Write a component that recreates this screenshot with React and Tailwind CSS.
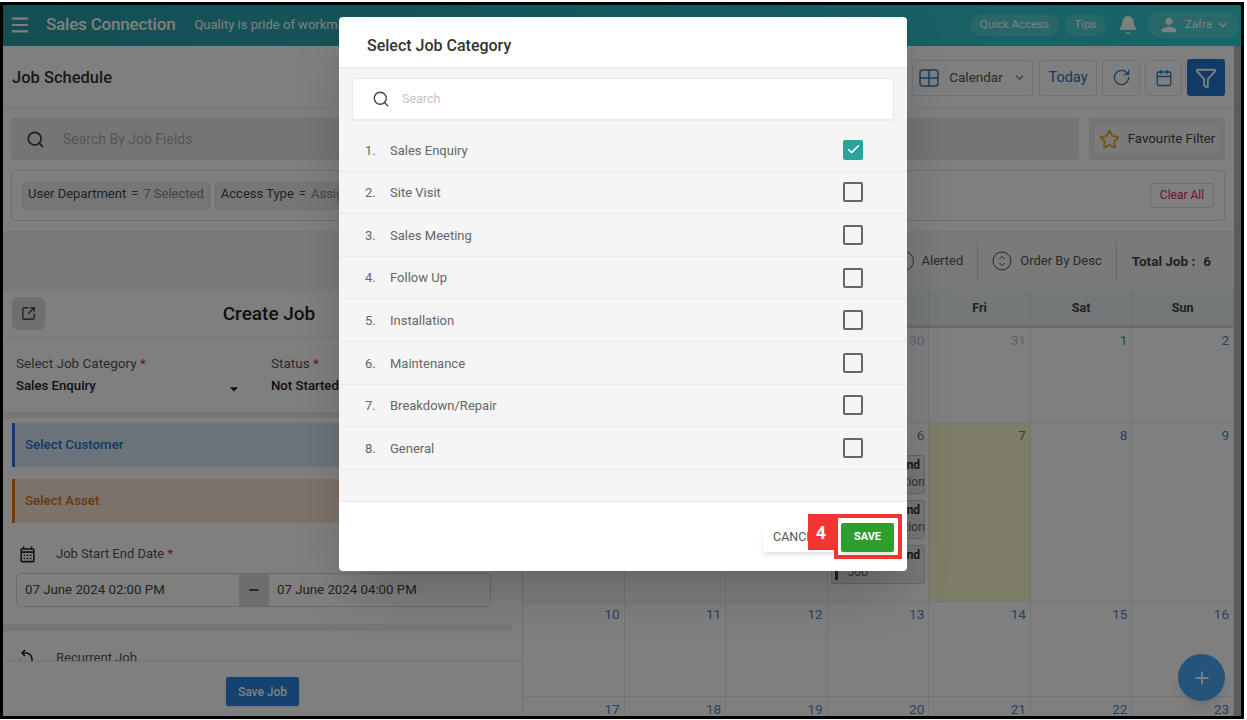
import React from "react";
import { Menu, Search, Bell, ChevronDown, RotateCw, Calendar, Funnel, Star, SquareArrowOutUpRight, Plus, Check, Minus } from "lucide-react";
import { MdPerson, MdArrowDropDown, MdOutlineCalendarMonth } from "react-icons/md";

const categories = ["Sales Enquiry", "Site Visit", "Sales Meeting", "Follow Up", "Installation", "Maintenance", "Breakdown/Repair", "General"];
const weekDays = ["Mon", "Tue", "Wed", "Thu", "Fri", "Sat", "Sun"];
const weeks = [
  [27, 28, 29, 30, 31, 1, 2],
  [3, 4, 5, 6, 7, 8, 9],
  [10, 11, 12, 13, 14, 15, 16],
  [17, 18, 19, 20, 21, 22, 23],
];

function ToolButton({ children, className }) {
  return (
    <div className={"h-9 flex items-center justify-center rounded-[3px] border border-[#e2e2e2] bg-white " + className}>
      {children}
    </div>
  );
}

function GridIcon() {
  return (
    <svg width="20" height="18" viewBox="0 0 20 18" fill="none" stroke="#2a80c8" strokeWidth="1.5">
      <rect x="1" y="1" width="18" height="16" rx="2.5" />
      <path d="M10 1v16M1 9h18" />
    </svg>
  );
}

function SortIcon() {
  return (
    <svg width="20" height="20" viewBox="0 0 20 20" fill="none" stroke="#555" strokeWidth="1">
      <circle cx="10" cy="10" r="9" />
      <path d="M7.5 8 10 5.5 12.5 8M7.5 12l2.5 2.5 2.5-2.5" />
    </svg>
  );
}

function RecurIcon() {
  return (
    <svg width="20" height="20" viewBox="0 0 20 20" fill="none" stroke="#222" strokeWidth="1.6">
      <path d="M8 2 5 5l3 3" />
      <path d="M5 5h4a6 6 0 0 1 6 6v2" />
      <path d="M3 11v.5M4 14.5v.5" strokeDasharray="1.5 2" />
    </svg>
  );
}

function Topbar() {
  return (
    <div className="h-[41px] shrink-0 flex items-center bg-gradient-to-r from-[#289ba6] to-[#33ccd2] pl-[6px] pr-[2px] pb-[2px] text-white">
      <Menu size={22} strokeWidth={2.4} className="mr-[15px]" />
      <span className="text-[17px] font-medium tracking-[-0.2px]">Sales Connection</span>
      <span className="ml-[19px] text-[13px]">Quality is pride of workmanship</span>
      <div className="ml-auto flex items-center">
        <span className="h-[22px] w-[89px] flex items-center justify-center rounded-full bg-white/15 text-[11.5px]">Quick Access</span>
        <span className="ml-[6px] h-[22px] w-[41px] flex items-center justify-center rounded-full bg-white/15 text-[11.5px]">Tips</span>
        <Bell size={20} fill="white" strokeWidth={1.5} className="ml-[12px]" />
        <div className="ml-[10px] h-[27px] w-[91px] flex items-center justify-center gap-[5px] rounded-full bg-white/15 text-[11.5px]">
          <MdPerson size={22} />
          <span>Zafra</span>
          <ChevronDown size={12} strokeWidth={3} />
        </div>
      </div>
    </div>
  );
}

function TitleRow() {
  return (
    <div className="h-[62px] shrink-0 flex items-center pl-[9px] pr-[9px] pt-[2px] border-b border-[#eee]">
      <span className="pt-[1px] text-[16.5px] font-medium text-[#333]">Job Schedule</span>
      <div className="ml-auto flex items-center">
        <ToolButton className="w-[121px] gap-[10px]">
          <GridIcon />
          <span className="pb-[1px] text-[13.5px] text-[#555]">Calendar</span>
          <ChevronDown size={13} className="text-[#666]" />
        </ToolButton>
        <ToolButton className="ml-[6px] w-[58px] text-[14.5px] text-[#2a6fb8]">Today</ToolButton>
        <ToolButton className="ml-[5px] w-[38px]"><RotateCw size={19} strokeWidth={1.7} className="text-[#2a80c8]" /></ToolButton>
        <ToolButton className="ml-[5px] w-[37px]"><Calendar size={18} strokeWidth={1.7} className="text-[#2a80c8]" /></ToolButton>
        <div className="ml-[5px] h-[37px] w-[38px] flex items-center justify-center rounded-[3px] bg-[#2277cc] text-white">
          <Funnel size={22} strokeWidth={2} />
        </div>
      </div>
    </div>
  );
}

function SearchRow() {
  return (
    <div className="mt-[10px] shrink-0 flex pl-[8px] pr-[9px] gap-[10px]">
      <div className="h-[42px] flex-1 flex items-center rounded-[3px] border border-[#e4e4e4] bg-[#eaeaea] pl-[14px]">
        <Search size={19} strokeWidth={2.2} className="text-[#444]" />
        <span className="ml-[18px] text-[14px] text-[#aaa]">Search By Job Fields</span>
      </div>
      <div className="h-[42px] w-[136px] flex items-center justify-center rounded-[3px] border border-[#e4e4e4] bg-[#eaeaea]">
        <div className="h-[28px] w-[125px] flex items-center justify-center gap-[8px] rounded-[3px] bg-[#f4f4f4]">
          <Star size={21} strokeWidth={2} className="text-[#e8a020]" />
          <span className="text-[13.3px] text-[#444]">Favourite Filter</span>
        </div>
      </div>
    </div>
  );
}

function FilterChip({ label, value }) {
  return (
    <div className="h-[28px] flex items-center gap-[5px] rounded-[3px] border border-[#ddd] bg-[#ececec] px-[5px] pb-[3px] text-[13px] text-[#444]">
      <span>{label}</span>
      <span>=</span>
      <span className="text-[#888]">{value}</span>
    </div>
  );
}

function FilterRow() {
  return (
    <div className="ml-[8px] mr-[9px] mt-[10px] h-[51px] shrink-0 flex items-center gap-[5px] rounded-[3px] border border-[#ddd] px-[10px]">
      <FilterChip label="User Department" value="7 Selected" />
      <FilterChip label="Access Type" value="Assigned" />
      <div className="ml-auto h-[25px] w-[64px] flex items-center justify-center rounded-[3px] border border-[#ddd] pb-[1px] text-[12px] text-[#e0245e]">Clear All</div>
    </div>
  );
}

function InfoRow() {
  return (
    <div className="mt-[10px] h-[60px] shrink-0 flex items-center justify-end bg-[#f4f4f4] border-y border-[#eee] pr-[23px] text-[13px] text-[#555]">
      <div className="mr-[14px] flex items-center gap-[8px]">
        <div className="h-[20px] w-[20px] rounded-full border border-[#555]" />
        <span>Alerted</span>
      </div>
      <div className="h-[38px] w-px bg-[#ccc]" />
      <div className="ml-[14px] flex items-center gap-[8px]">
        <SortIcon />
        <span>Order By Desc</span>
      </div>
      <div className="ml-[14px] mr-[15px] h-[38px] w-px bg-[#ccc]" />
      <div className="flex gap-[8px] text-[13.5px] font-bold text-[#444]">
        <span>Total Job :</span>
        <span>6</span>
      </div>
    </div>
  );
}

function CreateJob() {
  return (
    <div className="w-[520px] shrink-0 flex flex-col overflow-hidden border-r border-[#ddd]">
      <div className="flex-1 overflow-hidden">
        <div className="relative h-[47px] flex items-center justify-center border-b border-[#e8e8e8]">
          <div className="absolute left-[9px] top-[6px] h-[33px] w-[33px] flex items-center justify-center rounded-[6px] bg-[#dedede]">
            <SquareArrowOutUpRight size={15} strokeWidth={1.8} className="text-[#222]" />
          </div>
          <span className="ml-[13px] text-[19px] font-medium text-[#222]">Create Job</span>
        </div>
        <div className="h-[74px] flex pl-[13px] pt-[16px]">
          <div className="w-[255px]">
            <div className="text-[13.5px] leading-[18px] text-[#555]">Select Job Category <span className="text-[#e02020]">*</span></div>
            <div className="relative mt-[5px] text-[13.2px] leading-[18px] font-medium text-[#222]">
              Sales Enquiry
              <MdArrowDropDown size={20} className="absolute right-[27px] top-[2px] text-[#222]" />
            </div>
          </div>
          <div>
            <div className="text-[13.5px] leading-[18px] text-[#555]">Status <span className="text-[#e02020]">*</span></div>
            <div className="mt-[5px] text-[13.2px] leading-[18px] font-medium text-[#222]">Not Started</div>
          </div>
        </div>
        <div className="h-[6px] bg-[#ececec]" />
        <div className="ml-[9px] mr-[10px] mt-[5px] h-[44px] flex items-center border-l-[3px] border-[#2277cc] bg-[#d6e8f4] pl-[10px] text-[13.3px] font-medium text-[#2277cc]">Select Customer</div>
        <div className="ml-[9px] mr-[10px] mt-[12px] h-[44px] flex items-center border-l-[3px] border-[#e07a20] bg-[#f6e4d4] pl-[10px] text-[13.3px] font-medium text-[#d8701a]">Select Asset</div>
        <div className="mt-[21px] h-[20px] flex items-center pl-[15px]">
          <MdOutlineCalendarMonth size={19} className="text-[#222]" />
          <span className="ml-[19px] text-[13px] text-[#555]">Job Start End Date <span className="text-[#e02020]">*</span></span>
        </div>
        <div className="ml-[13px] mt-[9px] h-[34px] w-[475px] flex rounded-[5px] border border-[#cfd8e4] text-[13.25px] text-[#444]">
          <div className="w-[222px] flex items-center pl-[8px]">07 June 2024 02:00 PM</div>
          <div className="w-[30px] flex items-center justify-center bg-[#dddddd]"><Minus size={14} strokeWidth={2.5} className="text-[#222]" /></div>
          <div className="flex-1 flex items-center pl-[8px]">07 June 2024 04:00 PM</div>
        </div>
        <div className="mt-[17px] mr-[10px] h-[7px] bg-[#ececec]" />
        <div className="mt-[17px] flex items-center pl-[14px]">
          <RecurIcon />
          <span className="ml-[19px] text-[13px] text-[#555]">Recurrent Job</span>
        </div>
      </div>
      <div className="h-[55px] shrink-0 flex justify-center pt-[15px] border-t border-[#e8e8e8]">
        <div className="h-[29px] w-[73px] flex items-center justify-center rounded-[2px] bg-[#2b84dc] text-[12px] font-medium text-white shadow">Save Job</div>
      </div>
    </div>
  );
}

function Chip({ title, sub }) {
  return (
    <div className="relative mx-[3px] mt-[6px] first:mt-[11px] h-[39px] rounded-[3px] border border-[#ccc] bg-[#ececec] pl-[16px] pt-[1px] overflow-hidden text-[12px] leading-[17px] whitespace-nowrap">
      <div className="absolute left-[3px] top-[3px] bottom-[3px] w-[3px] bg-[#444]" />
      <div className="font-bold text-[#333]">{title}</div>
      <div className="text-[#666]">{sub}</div>
    </div>
  );
}

function MonthView() {
  return (
    <div className="w-[711px] shrink-0 flex flex-col overflow-hidden">
      <div className="grid grid-cols-7 h-[37px] shrink-0 bg-[#e8f0f0] border-b-[3px] border-[#d4d8d8]">
        {weekDays.map((d) => (
          <div key={d} className="flex items-center justify-center border-r border-[#d8dcdc] text-[12.5px] font-bold text-[#444]">{d}</div>
        ))}
      </div>
      <div className="flex-1 grid grid-cols-7 grid-rows-[95px_179px_95px_95px] bg-white">
        {weeks.flatMap((week, w) =>
          week.map((day, i) => {
            const faded = w === 0 && i < 5;
            const today = w === 1 && i === 4;
            return (
              <div key={w + "-" + i} className={"border-r border-b border-[#e4e6e6] pt-[3px] " + (today ? "bg-[#fdfcd0]" : "")}>
                <div className={"pr-[4px] text-right text-[13.5px] leading-[18px] " + (faded ? "text-[#b4cce4]" : "text-[#4f86bc]")}>{day}</div>
                {w === 1 && i === 3 && (
                  <div>
                    <Chip title="Sales Legend" sub="On Installation" />
                    <Chip title="Sales Legend" sub="On Installation" />
                    <Chip title="Sales Legend" sub="Job" />
                  </div>
                )}
              </div>
            );
          })
        )}
      </div>
    </div>
  );
}

function Modal() {
  return (
    <div className="absolute left-[339px] top-[17px] h-[554px] w-[568px] flex flex-col rounded-[4px] bg-white shadow-2xl overflow-hidden">
      <div className="h-[51px] shrink-0 flex items-center pl-[28px] pt-[8px] border-b border-[#e6e9ef] text-[16px] font-medium text-[#333]">Select Job Category</div>
      <div className="h-[434px] shrink-0 bg-[#f5f5f5] border-b border-[#e6e9ef]">
        <div className="mx-[13px] mt-[10px] h-[43px] flex items-center rounded-[3px] border border-[#e8eaf0] border-b-2 bg-white pl-[19px]">
          <Search size={18} strokeWidth={1.8} className="text-[#444]" />
          <span className="ml-[12px] text-[12.5px] text-[#c4c4c4]">Search</span>
        </div>
        <div className="mt-[8px]">
          {categories.map((name, i) => (
            <div key={name} className="h-[42.6px] flex items-center border-b border-[#e6e9ef] pl-[26px] pr-[44px] text-[13px] text-[#666]">
              <span className="w-[25px] pt-[1px]">{i + 1}.</span>
              <span className="pt-[1px]">{name}</span>
              {i === 0 ? (
                <div className="ml-auto h-[20px] w-[20px] flex items-center justify-center rounded-[2px] bg-[#26a69a] text-white">
                  <Check size={15} strokeWidth={2.5} />
                </div>
              ) : (
                <div className="ml-auto h-[20px] w-[20px] rounded-[2px] border-2 border-[#666]" />
              )}
            </div>
          ))}
        </div>
      </div>
      <div className="flex-1 flex justify-end items-start pt-[21px] pr-[13px]">
        <div className="h-[29px] w-[72px] flex items-center pl-[10px] rounded-[2px] bg-white shadow-md text-[12.5px] text-[#555]">CANCEL</div>
        <div className="ml-[6px] h-[29px] w-[53px] flex items-center justify-center rounded-[2px] bg-[#2e9e2e] text-[11px] font-bold text-white shadow-md">SAVE</div>
      </div>
    </div>
  );
}

export default function App() {
  return (
    <div className="relative h-[720px] w-[1247px] overflow-hidden bg-white font-['Roboto',sans-serif]">
      <div className="h-[717px] w-[1244px] mt-[2px] flex flex-col overflow-hidden border-[3px] border-black">
        <Topbar />
        <div className="flex-1 flex overflow-hidden">
          <div className="w-[1231px] shrink-0 flex flex-col overflow-hidden">
            <TitleRow />
            <SearchRow />
            <FilterRow />
            <InfoRow />
            <div className="flex-1 flex overflow-hidden">
              <CreateJob />
              <MonthView />
            </div>
          </div>
          <div className="flex-1 bg-[#b8b8b8]" />
        </div>
      </div>

      <div className="absolute left-[1178px] top-[654px] h-[47px] w-[47px] flex items-center justify-center rounded-full bg-[#4aa8f4] text-white shadow-lg">
        <Plus size={20} strokeWidth={2.2} />
      </div>

      {/* dim layer under the dialog, frame stays black */}
      <div className="absolute left-[3px] top-[5px] h-[711px] w-[1238px] bg-black/50" />
      <Modal />

      {/* tutorial annotation */}
      <div className="absolute left-[834px] top-[514px] h-[45px] w-[68px] border-4 border-[#f43333]" />
      <div className="absolute left-[808px] top-[514px] h-[36px] w-[26px] flex items-center justify-center bg-[#f43333] text-[18px] font-bold text-white">4</div>
    </div>
  );
}
